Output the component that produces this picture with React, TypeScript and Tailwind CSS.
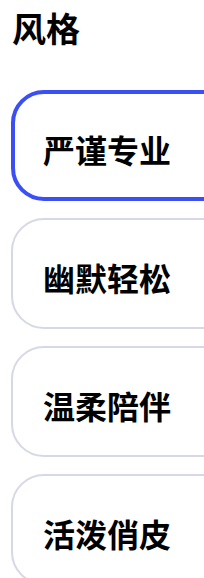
const STYLES = ["严谨专业", "幽默轻松", "温柔陪伴", "活泼俏皮"];

export default function App() {
  const selected = 0;
  return (
    <div
      className="w-[204px] h-[578px] overflow-hidden bg-white text-black"
      style={{ fontFamily: '"Noto Sans CJK SC", "Noto Sans", sans-serif' }}
    >
      <h1 className="pl-3 pt-[6px] text-[34px] leading-[44px] font-bold">风格</h1>
      <div className="mt-[40px] ml-[11px] flex flex-col gap-[17px]">
        {STYLES.map((s, i) => (
          <div
            key={s}
            className={
              i === selected
                ? "w-[260px] h-[111px] shrink-0 flex items-center rounded-[33px] border-4 border-[#3a50f5] pl-[28px] pt-[6px]"
                : "w-[260px] h-[111px] shrink-0 flex items-center rounded-[33px] border-2 border-[#d6d8e4] pl-[30px] pt-[6px]"
            }
          >
            <span className="text-[32px] font-bold leading-none">{s}</span>
          </div>
        ))}
      </div>
    </div>
  );
}
